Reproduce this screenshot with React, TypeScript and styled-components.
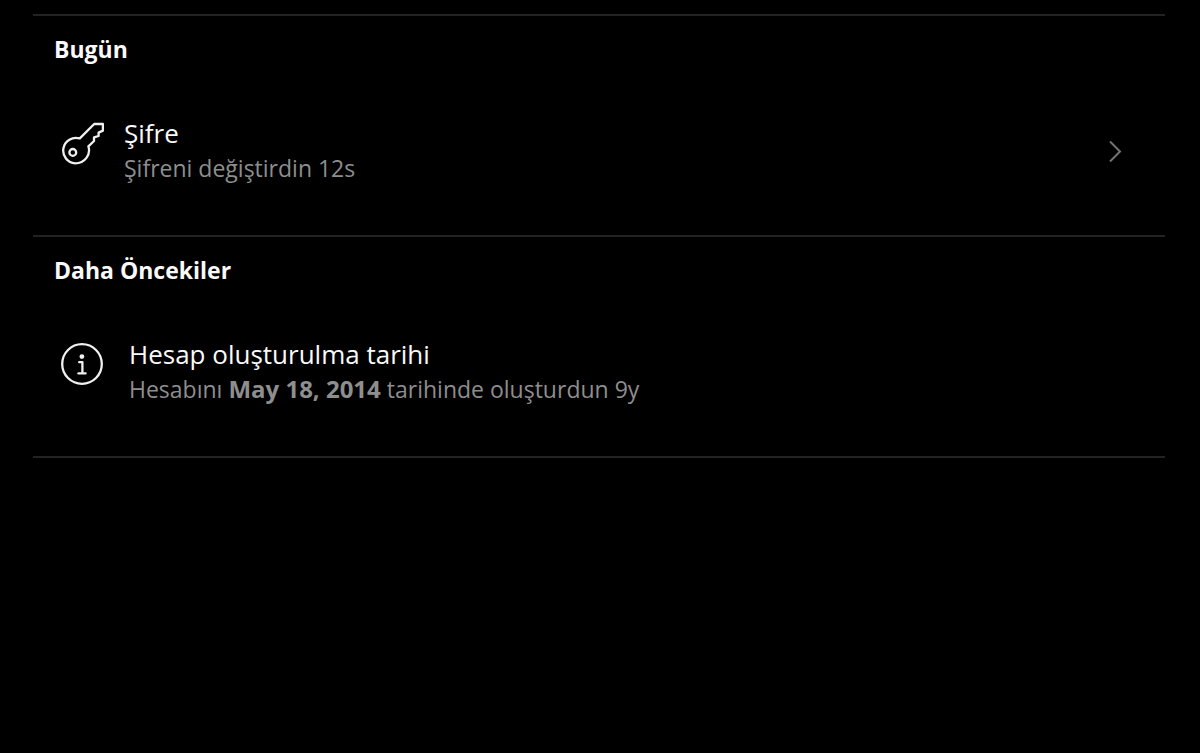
import React from "react";
import styled, { createGlobalStyle } from "styled-components";

const GlobalStyle = createGlobalStyle`
  *, *::before, *::after { box-sizing: border-box; }
  body {
    margin: 0;
    background: #000;
    color: #fafafa;
    font-family: "Segoe UI", "Open Sans", "Noto Sans", sans-serif;
  }
`;

const Page = styled.main`
  min-height: 100vh;
  padding: 14px 35px 0 33px;
`;

const Section = styled.section`
  border-top: 2px solid #222;
  padding: 15px 21px 49px;

  &:last-child {
    border-bottom: 2px solid #222;
  }
`;

const Heading = styled.h2`
  margin: 0;
  font-size: 23px;
  line-height: 36px;
  font-weight: 700;
`;

const Entry = styled.div<{ $gap: number }>`
  display: flex;
  align-items: center;
  gap: ${(p) => p.$gap}px;
  width: 100%;
  margin-top: 49px;
  padding: 0 22px 0 6px;
  border: 0;
  background: none;
  color: inherit;
  font: inherit;
  text-align: left;
`;

const Icon = styled.svg`
  flex: none;
  align-self: flex-start;
  width: 44px;
  height: 44px;
  margin-top: 5px;
  fill: none;
  stroke: #f0f0f0;
  stroke-width: 2.3;
  stroke-linejoin: round;
  stroke-linecap: round;
`;

const Chevron = styled.svg`
  flex: none;
  width: 14px;
  height: 22px;
  fill: none;
  stroke: #737373;
  stroke-width: 2;
`;

const Copy = styled.span`
  flex: 1;
  min-width: 0;
`;

const Title = styled.span`
  display: block;
  font-size: 26px;
  line-height: 35px;
`;

const Detail = styled.span`
  display: block;
  font-size: 23px;
  line-height: 35px;
  color: #8e8e8e;
`;

const DateText = styled.strong`
  font-size: 24px;
  line-height: 1;
`;

export default function App() {
  return (
    <>
      <GlobalStyle />
      <Page>
        <Section>
          <Heading>Bugün</Heading>
          <Entry as="button" type="button" $gap={20}>
            <Icon viewBox="0 0 44 44" aria-hidden="true">
              <path d="M19.8 17.4 34.2 3H42.9V9.6L38.6 11.6V15L34 16.4V20L28.4 25.4C31 33.4 25 42.4 15.2 42.4A12.8 12.8 0 1 1 19.8 17.4Z" />
              <circle cx="12.8" cy="31.4" r="3.4" />
            </Icon>
            <Copy>
              <Title>Şifre</Title>
              <Detail>Şifreni değiştirdin 12s</Detail>
            </Copy>
            <Chevron viewBox="0 0 14 22" aria-hidden="true">
              <path d="M2 1.5 12 11.5 2 21.5" />
            </Chevron>
          </Entry>
        </Section>
        <Section>
          <Heading>Daha Öncekiler</Heading>
          <Entry $gap={25}>
            <Icon viewBox="0 0 44 44" aria-hidden="true">
              <circle cx="22" cy="22" r="19.8" />
              <circle cx="21.9" cy="14.6" r="2.4" fill="#f0f0f0" stroke="none" />
              <path d="M19.2 20.2H22.4V31.4M18.4 31.4H25.6" />
            </Icon>
            <Copy>
              <Title>Hesap oluşturulma tarihi</Title>
              <Detail>
                Hesabını <DateText>May 18, 2014</DateText> tarihinde oluşturdun 9y
              </Detail>
            </Copy>
          </Entry>
        </Section>
      </Page>
    </>
  );
}
